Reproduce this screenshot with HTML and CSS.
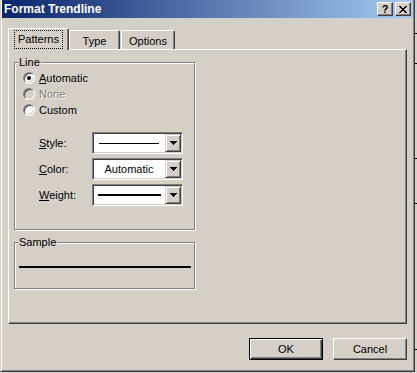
FILE: index.html
```
<!DOCTYPE html>
<html>
<head>
<meta charset="utf-8">
<link rel="stylesheet" href="styles.css">
</head>
<body>
<div class="screen">
  <div class="dialog">
    <div class="titlebar">
      <span class="title">Format Trendline</span>
      <div class="tbtns">
        <span class="tbtn help">?</span>
        <span class="tbtn close"><svg width="8" height="7" viewBox="0 0 8 7"><path d="M0 0h2v1h1v1h2v-1h1v-1h2v1h-1v1h-1v1h-1v1h1v1h1v1h1v1h-2v-1h-1v-1h-2v1h-1v1h-2v-1h1v-1h1v-1h1v-1h-1v-1h-1v-1h-1z" fill="#000"/></svg></span>
      </div>
    </div>
    <div class="tabs">
      <div class="tab sel"><span class="focus">Patterns</span></div>
      <div class="tab t-type">Type</div>
      <div class="tab t-opt">Options</div>
    </div>
    <div class="panel">
      <div class="group g-line">
        <div class="legend">Line</div>
        <div class="radios">
          <div class="radio"><span class="rb on"></span><span><u>A</u>utomatic</span></div>
          <div class="radio disabled"><span class="rb dis"></span><span>None</span></div>
          <div class="radio"><span class="rb"></span><span>Custom</span></div>
        </div>
        <div class="fields">
          <div class="field">
            <span class="flabel"><u>S</u>tyle:</span>
            <div class="combo"><div class="cval"><span class="ln thin"></span></div><span class="drop"><svg width="7" height="4" viewBox="0 0 7 4"><path d="M0 0h7v1h-1v1h-1v1h-1v1h-1v-1h-1v-1h-1v-1h-1z" fill="#000"/></svg></span></div>
          </div>
          <div class="field">
            <span class="flabel"><u>C</u>olor:</span>
            <div class="combo"><div class="cval"><span class="ctext">Automatic</span></div><span class="drop"><svg width="7" height="4" viewBox="0 0 7 4"><path d="M0 0h7v1h-1v1h-1v1h-1v1h-1v-1h-1v-1h-1v-1h-1z" fill="#000"/></svg></span></div>
          </div>
          <div class="field">
            <span class="flabel"><u>W</u>eight:</span>
            <div class="combo"><div class="cval"><span class="ln thick"></span></div><span class="drop"><svg width="7" height="4" viewBox="0 0 7 4"><path d="M0 0h7v1h-1v1h-1v1h-1v1h-1v-1h-1v-1h-1v-1h-1z" fill="#000"/></svg></span></div>
          </div>
        </div>
      </div>
      <div class="group g-sample">
        <div class="legend">Sample</div>
        <div class="sample-line"></div>
      </div>
    </div>
    <div class="buttons">
      <div class="btn def"><span>OK</span></div>
      <div class="btn"><span>Cancel</span></div>
    </div>
  </div>
  <div class="edge">
    <span class="tick t1"></span>
    <span class="tick t2"></span>
    <span class="tick t3"></span>
    <span class="tick t4"></span>
    <span class="tick t5"></span>
  </div>
</div>
</body>
</html>
```
FILE: styles.css
```
* { box-sizing: border-box; }
html, body { margin: 0; padding: 0; }
body {
  background: #D4D0C8;
  font-family: "Liberation Sans", Arial, sans-serif;
  font-size: 11px;
  color: #000;
  width: 417px;
  height: 373px;
  overflow: hidden;
}
.screen { display: flex; width: 417px; height: 373px; }
.dialog {
  width: 415px;
  height: 372px;
  flex: none;
  background: #D4D0C8;
  border-left: 1px solid #D4D0C8;
  border-right: 1px solid #404040;
  border-bottom: 1px solid #404040;
  box-shadow: inset 1px 0 #fff, inset -1px -1px #808080;
  padding: 0 2px 2px 2px;
  display: flex;
  flex-direction: column;
}
.titlebar {
  height: 18px;
  margin: 0 -1px;
  background: linear-gradient(to right, #0A246A, #A6CAF0);
  display: flex;
  align-items: center;
  justify-content: space-between;
  padding: 0 2px 0 2px;
}
.title {
  color: #fff;
  font-weight: bold;
  font-size: 12px;
  line-height: 18px;
}
.tbtns { display: flex; gap: 2px; }
.tbtn {
  width: 16px;
  height: 14px;
  background: #D4D0C8;
  border: 1px solid;
  border-color: #fff #404040 #404040 #fff;
  box-shadow: inset -1px -1px #808080;
  display: flex;
  align-items: center;
  justify-content: center;
  font-weight: bold;
  font-size: 11px;
  line-height: 12px;
}
.tabs {
  display: flex;
  align-items: flex-end;
  margin: 10px 0 0 5px;
  height: 21px;
}
.tab {
  height: 19px;
  background: #D4D0C8;
  border-left: 1px solid #fff;
  border-top: 1px solid #fff;
  border-right: 1px solid #404040;
  border-radius: 2px 2px 0 0;
  box-shadow: inset -1px 0 #808080;
  display: flex;
  align-items: center;
  justify-content: center;
  line-height: 13px;
}
.tab.sel {
  height: 22px;
  width: 61px;
  margin-bottom: -1px;
  position: relative;
  z-index: 1;
  padding-bottom: 1px;
}
.focus {
  outline: 1px dotted #000;
  padding: 2px 3px;
}
.t-type { width: 51px; padding-top: 2px; }
.t-opt { width: 54px; margin-left: 1px; padding-top: 2px; }
.panel {
  margin-left: 5px;
  width: 399px;
  height: 275px;
  border-left: 1px solid #fff;
  border-top: 1px solid #fff;
  border-right: 1px solid #404040;
  border-bottom: 1px solid #404040;
  box-shadow: inset -1px -1px #808080;
  padding: 0 0 0 5px;
}
.group {
  border: 1px solid #808080;
  box-shadow: inset 1px 1px #fff, 1px 1px #fff;
  width: 181px;
}
.g-line { margin-top: 12px; height: 168px; }
.g-sample { margin-top: 12px; height: 47px; }
.legend {
  display: block;
  width: max-content;
  margin: -7px 0 0 3px;
  padding: 0 1px;
  background: #D4D0C8;
  line-height: 13px;
  height: 13px;
}
.radios { margin-top: 1px; padding-left: 8px; }
.radio {
  height: 16px;
  display: flex;
  align-items: center;
  gap: 4px;
  line-height: 13px;
}
.radio.disabled { color: #808080; text-shadow: 1px 1px #fff; }
.rb {
  width: 12px;
  height: 12px;
  border-radius: 50%;
  background: #fff;
  border: 1px solid;
  border-color: #808080 #fff #fff #808080;
  box-shadow: inset 1px 1px #404040, inset -1px -1px #D4D0C8;
  display: flex;
  align-items: center;
  justify-content: center;
  flex: none;
}
.rb.dis { background: #D4D0C8; }
.rb.on::after {
  content: "";
  width: 4px;
  height: 4px;
  border-radius: 50%;
  background: #000;
}
.fields {
  margin-top: 14px;
  padding-left: 24px;
  display: flex;
  flex-direction: column;
  gap: 4px;
}
.field { display: flex; align-items: center; height: 22px; }
.flabel { width: 53px; line-height: 13px; }
.combo {
  width: 91px;
  height: 22px;
  background: #fff;
  border: 1px solid;
  border-color: #808080 #fff #fff #808080;
  box-shadow: inset 1px 1px #404040, inset -1px -1px #D4D0C8;
  padding: 1px 1px 1px 1px;
  display: flex;
}
.cval {
  flex: 1;
  display: flex;
  align-items: center;
  justify-content: center;
  padding-right: 1px;
}
.ln { display: block; width: 60px; background: #000; }
.ln.thin { height: 1px; }
.ln.thick { height: 2px; width: 63px; }
.ctext { line-height: 13px; }
.drop {
  width: 16px;
  height: 18px;
  background: #D4D0C8;
  border: 1px solid;
  border-color: #D4D0C8 #404040 #404040 #D4D0C8;
  box-shadow: inset 1px 1px #fff, inset -1px -1px #808080;
  display: flex;
  align-items: center;
  justify-content: center;
}
.drop svg { display: block; }
.sample-line {
  margin: 17px 0 0 4px;
  width: 172px;
  height: 2px;
  background: #000;
}
.buttons {
  display: flex;
  justify-content: flex-end;
  gap: 10px;
  margin: 14px 5px 0 0;
}
.btn {
  width: 74px;
  height: 22px;
  background: #D4D0C8;
  border: 1px solid;
  border-color: #fff #404040 #404040 #fff;
  box-shadow: inset -1px -1px #808080;
  display: flex;
  align-items: center;
  justify-content: center;
  line-height: 13px;
}
.btn.def {
  border: 1px solid #000;
  box-shadow: inset 1px 1px #fff, inset -1px -1px #404040, inset -2px -2px #808080;
}
.edge {
  flex: 1;
  position: relative;
  background: #D4D0C8;
}
.tick {
  position: absolute;
  right: 0;
  width: 2px;
  height: 1px;
  background: #000;
}
.t1 { top: 33px; }
.t2 { top: 63px; }
.t3 { top: 158px; }
.t4 { top: 203px; }
.t5 { top: 349px; }
```
